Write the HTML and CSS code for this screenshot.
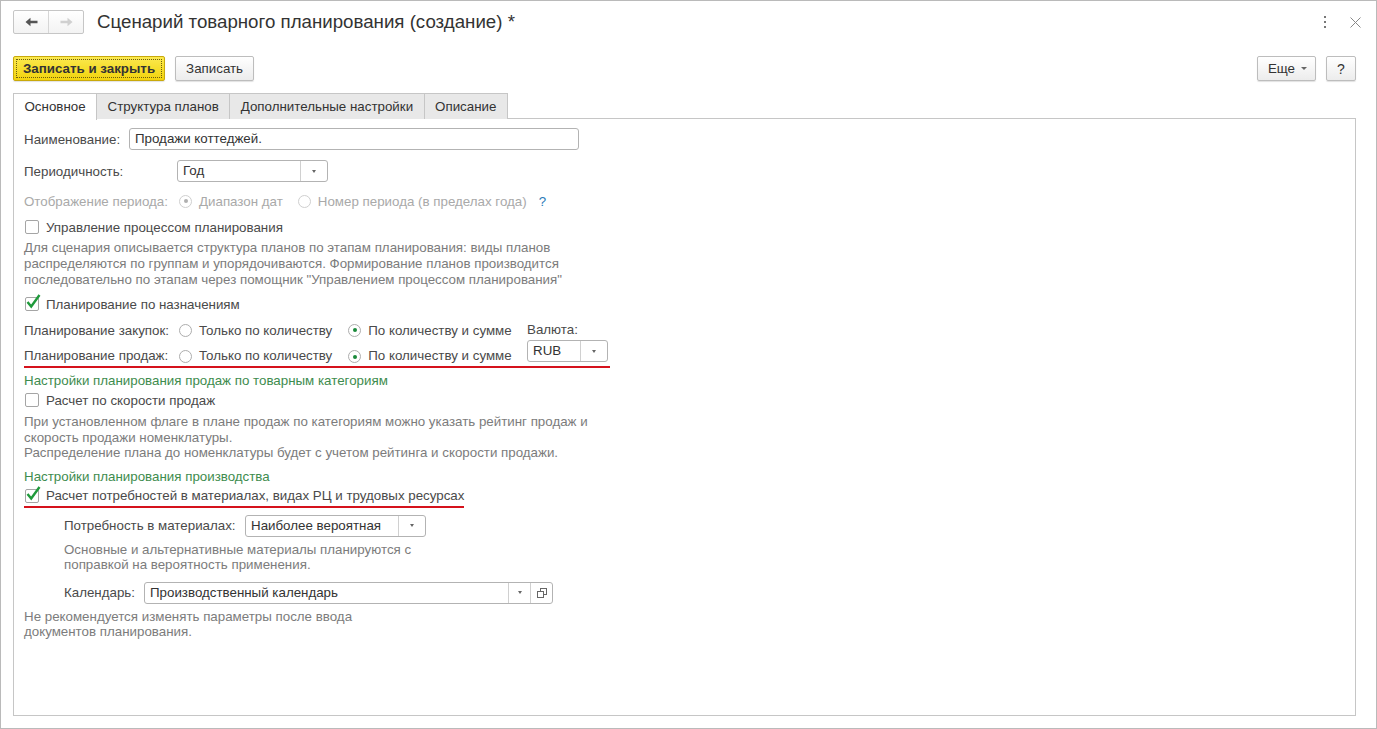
FILE: index.html
```html
<!DOCTYPE html>
<html lang="ru">
<head>
    <meta charset="UTF-8">
    <title>Сценарий товарного планирования (создание)</title>
    <link rel="stylesheet" href="styles.css">
</head>
<body>

<div class="window">
    <div class="titlebar">
        <div class="nav">
            <span class="nav-btn">
                <svg width="13" height="10" viewBox="0 0 13 10"><path d="M0.5 5 L5.5 0.8 L5.5 3.8 L12.5 3.8 L12.5 6.2 L5.5 6.2 L5.5 9.2 Z" fill="#555"/></svg>
            </span>
            <span class="nav-btn off">
                <svg width="13" height="10" viewBox="0 0 13 10"><path d="M12.5 5 L7.5 0.8 L7.5 3.8 L0.5 3.8 L0.5 6.2 L7.5 6.2 L7.5 9.2 Z" fill="#d0d0d0"/></svg>
            </span>
        </div>
        <h1 class="title">Сценарий товарного планирования (создание) *</h1>
        <span class="win-icon">
            <svg width="4" height="14" viewBox="0 0 4 14"><rect x="1" y="1" width="2" height="2" fill="#777"/><rect x="1" y="6" width="2" height="2" fill="#777"/><rect x="1" y="11" width="2" height="2" fill="#777"/></svg>
        </span>
        <span class="win-icon close">
            <svg width="11" height="11" viewBox="0 0 11 11"><path d="M0.5 0.5 L10.5 10.5 M10.5 0.5 L0.5 10.5" stroke="#888" stroke-width="1"/></svg>
        </span>
    </div>

    <div class="cmdbar">
        <button class="btn btn-default">Записать и закрыть</button>
        <button class="btn">Записать</button>
        <div class="spacer"></div>
        <button class="btn btn-more">Еще <span class="caret"></span></button>
        <button class="btn btn-help">?</button>
    </div>

    <div class="tabs">
        <div class="tab active">Основное</div>
        <div class="tab">Структура планов</div>
        <div class="tab">Дополнительные настройки</div>
        <div class="tab">Описание</div>
    </div>

    <div class="panel">
        <div class="row r-name">
            <span class="label w-name">Наименование:</span>
            <div class="input w-450">Продажи коттеджей.</div>
        </div>

        <div class="row r-period">
            <span class="label w-period">Периодичность:</span>
            <div class="select w-151">
                <span class="value">Год</span>
                <span class="drop"><span class="tri"></span></span>
            </div>
        </div>

        <div class="row r-display disabled">
            <span class="label w-radio">Отображение периода:</span>
            <span class="radio on"></span><span class="opt">Диапазон дат</span>
            <span class="radio gap-15"></span><span class="opt">Номер периода (в пределах года)</span>
            <span class="hint">?</span>
        </div>

        <div class="row r-check first">
            <span class="check"></span>
            <span class="opt">Управление процессом планирования</span>
        </div>
        <p class="note n-first">Для сценария описывается структура планов по этапам планирования: виды планов<br>
            распределяются по группам и упорядочиваются. Формирование планов производится<br>
            последовательно по этапам через помощник "Управлением процессом планирования"</p>

        <div class="row r-check after-note">
            <span class="check on">
                <svg width="16" height="16" viewBox="0 0 16 16"><path d="M2.5 8 L6.2 12.5 L14.5 1" fill="none" stroke="#1f9a3b" stroke-width="2.4"/></svg>
            </span>
            <span class="opt">Планирование по назначениям</span>
        </div>

        <div class="plan">
            <div class="plan-rows">
                <div class="row r-plan">
                    <span class="label w-radio">Планирование закупок:</span>
                    <span class="radio"></span><span class="opt">Только по количеству</span>
                    <span class="radio on gap-16"></span><span class="opt">По количеству и сумме</span>
                </div>
                <div class="row r-plan second">
                    <span class="label w-radio">Планирование продаж:</span>
                    <span class="radio"></span><span class="opt">Только по количеству</span>
                    <span class="radio on gap-16"></span><span class="opt">По количеству и сумме</span>
                </div>
            </div>
            <div class="currency">
                <div class="currency-label">Валюта:</div>
                <div class="select w-81">
                    <span class="value">RUB</span>
                    <span class="drop"><span class="tri"></span></span>
                </div>
            </div>
        </div>

        <div class="group-title g-sales">Настройки планирования продаж по товарным категориям</div>
        <div class="row r-check after-title">
            <span class="check"></span>
            <span class="opt">Расчет по скорости продаж</span>
        </div>
        <p class="note n-sales">При установленном флаге в плане продаж по категориям можно указать рейтинг продаж и<br>
            скорость продажи номенклатуры.<br>
            Распределение плана до номенклатуры будет с учетом рейтинга и скорости продажи.</p>

        <div class="group-title g-prod">Настройки планирования производства</div>
        <div class="row r-check after-title marked">
            <span class="check on">
                <svg width="16" height="16" viewBox="0 0 16 16"><path d="M2.5 8 L6.2 12.5 L14.5 1" fill="none" stroke="#1f9a3b" stroke-width="2.4"/></svg>
            </span>
            <span class="opt">Расчет потребностей в материалах, видах РЦ и трудовых ресурсах</span>
        </div>

        <div class="sub">
            <div class="row r-need">
                <span class="label w-need">Потребность в материалах:</span>
                <div class="select w-181">
                    <span class="value">Наиболее вероятная</span>
                    <span class="drop"><span class="tri"></span></span>
                </div>
            </div>
            <p class="note n-need">Основные и альтернативные материалы планируются с<br>
                поправкой на вероятность применения.</p>

            <div class="row r-cal">
                <span class="label w-cal">Календарь:</span>
                <div class="select w-409">
                    <span class="value">Производственный календарь</span>
                    <span class="drop narrow"><span class="tri"></span></span>
                    <span class="drop open">
                        <svg width="10" height="10" viewBox="0 0 10 10"><rect x="3.5" y="0.5" width="6" height="6" fill="#fff" stroke="#666"/><rect x="0.5" y="3.5" width="6" height="6" fill="#fff" stroke="#666"/></svg>
                    </span>
                </div>
            </div>
        </div>
        <p class="note n-last">Не рекомендуется изменять параметры после ввода<br>
            документов планирования.</p>
    </div>
</div>

</body>
</html>
```

FILE: styles.css
```css
html, body {
    margin: 0;
    padding: 0;
    height: 100%;
    overflow: hidden;
}

body {
    font-family: "Liberation Sans", Arial, sans-serif;
    font-size: 13.33px;
    color: #4a4a4a;
    background: #fff;
}

.window {
    box-sizing: border-box;
    height: 729px;
    border: 1px solid #bababa;
    padding: 9px 20px 12px 12px;
    display: flex;
    flex-direction: column;
}

/* заголовок окна */
.titlebar {
    display: flex;
    align-items: center;
    height: 24px;
}

.nav {
    display: flex;
    box-sizing: border-box;
    height: 24px;
    border: 1px solid #c6c6c6;
    border-radius: 2px;
    background: linear-gradient(#fff, #f3f3f3);
}

.nav-btn {
    width: 34px;
    display: flex;
    align-items: center;
    justify-content: center;
}

.nav-btn:first-child {
    border-right: 1px solid #d6d6d6;
}

.title {
    flex: 1;
    margin: 0 0 0 13px;
    font-size: 18.7px;
    font-weight: normal;
    color: #333;
}

.win-icon {
    display: flex;
    align-items: center;
    justify-content: center;
    width: 12px;
    margin-right: 18px;
}

.win-icon.close {
    margin-right: -5px;
}

/* командная панель */
.cmdbar {
    display: flex;
    gap: 10px;
    margin-top: 22px;
    height: 25px;
}

.spacer {
    flex: 1;
}

.btn {
    box-sizing: border-box;
    height: 25px;
    padding: 0 10px;
    border: 1px solid #bdbdbd;
    border-radius: 2px;
    background: linear-gradient(#fff, #ececec);
    box-shadow: 0 1px 1px rgba(0, 0, 0, 0.12);
    font-family: inherit;
    font-size: 13.33px;
    color: #333;
}

.btn-default {
    padding: 0 9px;
    background: linear-gradient(#fbe94f, #f2d30c);
    border-color: #c9a90a;
    font-weight: bold;
    outline: 1px dotted #6d5d10;
    outline-offset: -4px;
}

.btn-more {
    padding: 0 8px 0 10px;
    display: flex;
    align-items: center;
    gap: 6px;
}

.caret {
    width: 0;
    height: 0;
    border-left: 3px solid transparent;
    border-right: 3px solid transparent;
    border-top: 3px solid #666;
}

.btn-help {
    width: 30px;
    padding: 0;
    font-size: 14px;
}

/* вкладки */
.tabs {
    display: flex;
    height: 26px;
    margin-top: 12px;
    margin-bottom: -1px;
    position: relative;
    z-index: 1;
}

.tab {
    box-sizing: border-box;
    height: 26px;
    line-height: 25px;
    padding: 0 10.5px;
    border: 1px solid #c6c6c6;
    border-left: none;
    border-bottom: none;
    background: #e8e8e8;
    color: #333;
}

.tab:first-child {
    border-left: 1px solid #c6c6c6;
}

.tab.active {
    background: #fff;
    height: 27px;
}

.panel {
    flex: 1;
    border: 1px solid #c6c6c6;
    padding: 9px 10px 0 10px;
}

/* строки формы */
.row {
    display: flex;
    align-items: center;
}

.label {
    flex: none;
    color: #4a4a4a;
}

.w-name { width: 105px; }
.w-period { width: 153px; }
.w-radio { width: 155px; }
.w-need { width: 181px; }
.w-cal { width: 80px; }

.input, .select {
    box-sizing: border-box;
    height: 22px;
    border: 1px solid #b3b3b3;
    border-radius: 3px;
    color: #333;
    background: #fff;
}

.input {
    padding-left: 5px;
    line-height: 20px;
}

.select {
    display: flex;
}

.select .value {
    flex: 1;
    padding-left: 5px;
    line-height: 20px;
    white-space: nowrap;
}

.drop {
    width: 26px;
    border-left: 1px solid #d0d0d0;
    display: flex;
    align-items: center;
    justify-content: center;
}

.drop.narrow {
    width: 21px;
}

.drop.open {
    width: 21px;
}

.tri {
    width: 0;
    height: 0;
    border-left: 2.5px solid transparent;
    border-right: 2.5px solid transparent;
    border-top: 3px solid #666;
}

.w-450 { width: 450px; }
.w-151 { width: 151px; }
.w-81 { width: 81px; }
.w-181 { width: 181px; }
.w-409 { width: 409px; }

.r-name { height: 22px; }

.r-period {
    height: 22px;
    margin-top: 10px;
}

.r-display {
    height: 20px;
    margin-top: 9px;
}

.disabled, .disabled .label {
    color: #a9a9a9;
}

.radio {
    flex: none;
    box-sizing: border-box;
    width: 13px;
    height: 13px;
    border: 1px solid #adadad;
    border-radius: 50%;
    margin-right: 7px;
    display: flex;
    align-items: center;
    justify-content: center;
    background: #fff;
}

.radio.on:after {
    content: '';
    width: 4px;
    height: 4px;
    border-radius: 50%;
    background: #1a8a3a;
}

.disabled .radio {
    border-color: #cfcfcf;
}

.disabled .radio.on:after {
    background: #b0b0b0;
}

.gap-15 { margin-left: 15px; }
.gap-16 { margin-left: 16px; }

.opt {
    white-space: nowrap;
}

.hint {
    margin-left: 12px;
    color: #2a7ab8;
}

.r-check {
    height: 20px;
}

.r-check.first { margin-top: 6px; }
.r-check.after-note { margin-top: 6px; }
.r-check.after-title { margin-top: 1px; }

.check {
    flex: none;
    box-sizing: border-box;
    position: relative;
    width: 14px;
    height: 14px;
    margin: 0 7px 0 1px;
    border: 1px solid #a5a5a5;
    border-radius: 2px;
    background: #fff;
}

.check svg {
    position: absolute;
    left: -1px;
    top: -4px;
}

.note {
    margin: 0;
    color: #7c7c7c;
    line-height: 15.5px;
}

.n-first {
    margin-top: 3px;
    line-height: 16px;
}

.n-sales { margin-top: 4px; }
.n-need { margin-top: 5px; }
.n-last { margin-top: 5px; }

/* планирование закупок и продаж */
.plan {
    display: flex;
    width: 586px;
    margin-top: 3px;
    border-bottom: 2px solid #d5121c;
}

.r-plan {
    height: 26px;
}

.r-plan.second {
    height: 23px;
    align-items: flex-start;
    padding-top: 5px;
    box-sizing: border-box;
}

.r-plan.second .radio {
    margin-top: 2px;
}

.currency {
    margin-left: auto;
    width: 83px;
}

.currency-label {
    height: 23px;
    line-height: 26px;
}

.group-title {
    color: #3e8c4e;
    line-height: 16px;
}

.g-sales { margin-top: 5px; }
.g-prod { margin-top: 8px; }

.marked {
    width: 440px;
    border-bottom: 2px solid #d5121c;
}

.sub {
    padding-left: 40px;
}

.r-need {
    height: 22px;
    margin-top: 7px;
}

.r-cal {
    height: 22px;
    margin-top: 9px;
}
```
